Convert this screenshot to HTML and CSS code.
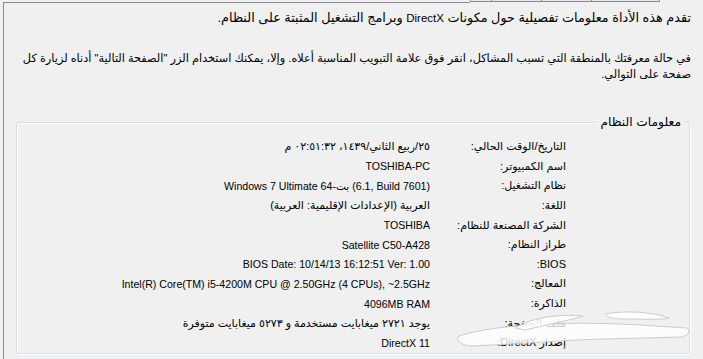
FILE: index.html
```html
<!DOCTYPE html>
<html lang="ar" dir="rtl">
<head>
<meta charset="utf-8">
<link rel="stylesheet" href="styles.css">
</head>
<body>
<div class="topbar">
  <div class="strip"></div>
  <div class="tab t1"></div>
  <div class="tab t2"></div>
  <div class="tab t3"></div>
  <div class="tab t4"></div>
</div>
<div class="panel">
  <p class="intro">تقدم هذه الأداة معلومات تفصيلية حول مكونات <span class="lat">DirectX</span> وبرامج التشغيل المثبتة على النظام.</p>
  <p class="help">في حالة معرفتك بالمنطقة التي تسبب المشاكل، انقر فوق علامة التبويب المناسبة أعلاه. وإلا، يمكنك استخدام الزر "الصفحة التالية" أدناه لزيارة كل صفحة على التوالي.</p>
  <fieldset class="group">
    <legend class="legend">معلومات النظام</legend>
    <div class="rows">
      <div class="label">التاريخ/الوقت الحالي:</div>
      <div class="value">٢٥/ربيع الثاني/١٤٣٩، ٠٢:٥١:٣٢ م</div>
      <div class="label">اسم الكمبيوتر:</div>
      <div class="value lat" dir="ltr">TOSHIBA-PC</div>
      <div class="label">نظام التشغيل:</div>
      <div class="value lat" dir="ltr">Windows 7 Ultimate 64-بت (6.1, Build 7601)</div>
      <div class="label">اللغة:</div>
      <div class="value">العربية (الإعدادات الإقليمية: العربية)</div>
      <div class="label">الشركة المصنعة للنظام:</div>
      <div class="value lat" dir="ltr">TOSHIBA</div>
      <div class="label">طراز النظام:</div>
      <div class="value lat" dir="ltr">Satellite C50-A428</div>
      <div class="label">BIOS:</div>
      <div class="value lat" dir="ltr">BIOS Date: 10/14/13 16:12:51 Ver: 1.00</div>
      <div class="label">المعالج:</div>
      <div class="value lat" dir="ltr">Intel(R) Core(TM) i5-4200M CPU @ 2.50GHz (4 CPUs), ~2.5GHz</div>
      <div class="label">الذاكرة:</div>
      <div class="value lat" dir="ltr">4096MB RAM</div>
      <div class="label">ملف الصفحة:</div>
      <div class="value">يوجد ٢٧٢١ ميغابايت مستخدمة و ٥٢٧٣ ميغابايت متوفرة</div>
      <div class="label">إصدار DirectX:</div>
      <div class="value lat" dir="ltr">DirectX 11</div>
    </div>
  </fieldset>
</div>
<svg class="watermark" width="240" height="44" viewBox="0 0 240 44" aria-hidden="true">
  <path d="M4 30 C40 18 120 14 200 20 L232 22 C236 24 234 30 226 31 L150 33 C110 34 60 38 18 40 C6 40 0 34 4 30 Z" fill="#ffffff" fill-opacity="0.8" stroke="#cccccc" stroke-width="1"/>
  <path d="M150 8 C170 4 198 6 214 12 C206 14 190 13 172 13 C160 13 152 12 150 8 Z" fill="#ffffff" fill-opacity="0.85" stroke="#cccccc" stroke-width="1"/>
  <path d="M60 22 C80 10 108 8 128 10 C116 14 96 18 70 24 Z" fill="#ffffff" fill-opacity="0.85" stroke="#cccccc" stroke-width="1"/>
</svg>
</body>
</html>
```
FILE: styles.css
```css
html, body {
  margin: 0;
  padding: 0;
  background: #f0f0f0;
}
body {
  width: 703px;
  height: 359px;
  overflow: hidden;
  position: relative;
  font-family: "Liberation Sans", "DejaVu Sans", sans-serif;
  font-size: 11px;
  color: #000;
}
.topbar {
  display: flex;
  direction: ltr;
  height: 3px;
}
.strip {
  width: 467px;
  margin-left: 3px;
  border-top: 1px solid #898c95;
  margin-top: 2px;
}
.tab {
  height: 1px;
  border-bottom: 1px solid #898c95;
  border-right: 1px solid #898c95;
  background: #e8e8e8;
}
.t1 { width: 20px; border-left: 1px solid #898c95; }
.t2 { width: 49px; }
.t3 { width: 49px; }
.t4 { width: 67px; }
.panel {
  margin-left: 3px;
  border-left: 1px solid #898c95;
  height: 356px;
  padding: 7px 12px 0 0;
  box-sizing: border-box;
}
.intro {
  margin: 0;
  line-height: 16px;
  font-size: 12.8px;
}
.help {
  margin: 24px 0 0 0;
  line-height: 16px;
  font-size: 11.3px;
}
.lat {
  font-size: 10.6px;
}
.intro .lat {
  font-size: 11.5px;
}
.group {
  margin: 32px 1px 0 12px;
  padding: 0 6px 0 0;
  border: 1px solid #d5dfe5;
  box-shadow: inset 1px 1px 0 #ffffff, 1px 1px 0 #ffffff;
  border-radius: 2px;
  min-width: 0;
}
.legend {
  padding: 0 2px;
  line-height: 16px;
  font-size: 12.3px;
}
.rows {
  display: grid;
  grid-template-columns: 136px 1fr;
  grid-auto-rows: 19.6px;
  align-items: center;
  padding: 7px 117px 0 0;
}
.label {
  text-align: right;
  white-space: nowrap;
}
.value {
  text-align: right;
  white-space: nowrap;
}
.watermark {
  position: absolute;
  left: 455px;
  top: 306px;
}
```
